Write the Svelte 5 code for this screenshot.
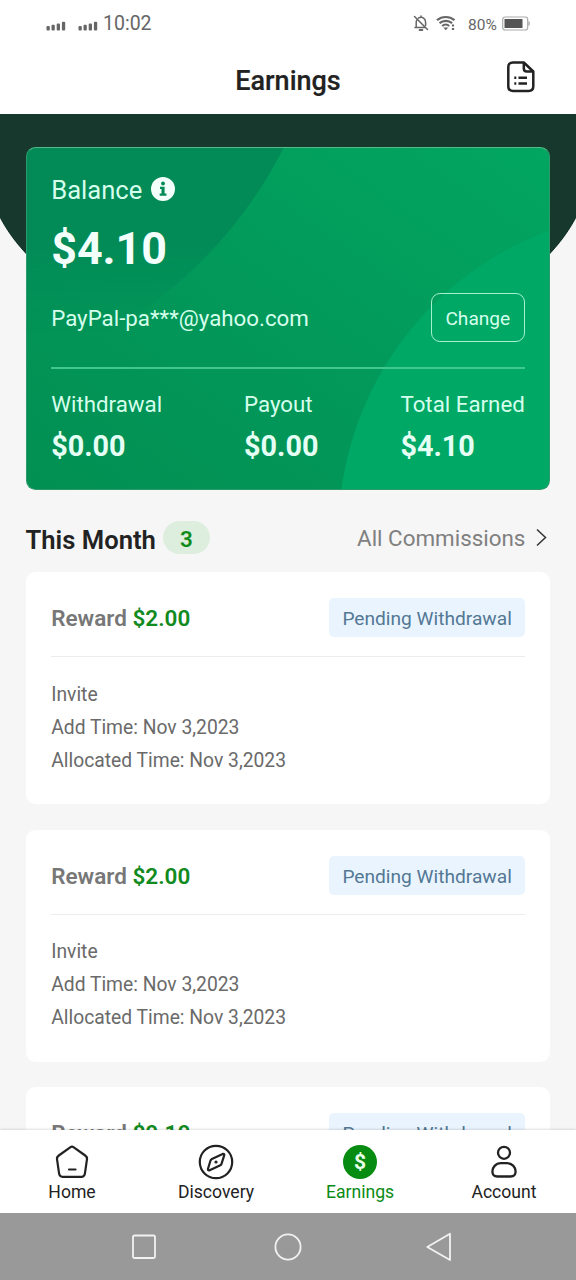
<script>
  const stats = [
    { label: 'Withdrawal', value: '$0.00' },
    { label: 'Payout', value: '$0.00' },
    { label: 'Total Earned', value: '$4.10' }
  ];
  const rewards = [
    { amount: '$2.00', status: 'Pending Withdrawal', kind: 'Invite', added: 'Nov 3,2023', allocated: 'Nov 3,2023' },
    { amount: '$2.00', status: 'Pending Withdrawal', kind: 'Invite', added: 'Nov 3,2023', allocated: 'Nov 3,2023' },
    { amount: '$0.10', status: 'Pending Withdrawal', kind: 'Invite', added: 'Nov 3,2023', allocated: 'Nov 3,2023' }
  ];
</script>

{#snippet signal()}
  <svg class="signal" width="20" height="10" viewBox="0 0 20 10" fill="#666">
    <rect x="0.5" y="5" width="3.300" height="4.500" rx="1" />
    <rect x="5.5" y="3.800" width="3.300" height="5.700" rx="1" />
    <rect x="10.7" y="2.600" width="3.300" height="6.900" rx="1" />
    <rect x="15.9" y="0.800" width="3.300" height="8.700" rx="1" />
  </svg>
{/snippet}

<div class="screen">
  <div class="status">
    <div class="carriers">{@render signal()}{@render signal()}</div>
    <span class="clock">10:02</span>
    <svg class="bell" width="16" height="17" viewBox="0 0 16 17" fill="none" stroke="#666" stroke-width="1.5" stroke-linecap="round">
      <path d="M3.2 12.500V7.200c0-1 .3-1.900.8-2.600M5.400 3.100C7 2 9 2 10.600 3.100c1.300.9 2 2.400 2 4.100v3.300M2 12.600h9.700M1.500 1.500l13 13M8 1v1.200" />
      <path d="M6.700 15h2.600" stroke-width="2" />
    </svg>
    <svg class="wifi" width="20" height="16" viewBox="0 0 20 16" fill="none" stroke="#666" stroke-width="2.200">
      <path d="M1 5.200c5-4.300 12.500-4.300 17.500 0M3.500 8.100c3.600-3 9-3 12.600 0M6.200 11c2-1.800 5-1.800 7 0" />
      <path d="M7.300 12.400h5l-2.500 2.800z" fill="#666" stroke="none" />
      <path d="M17 9.500v2M17 13v2" />
    </svg>
    <span class="percent">80%</span>
    <svg class="battery" width="28" height="15" viewBox="0 0 28 15">
      <rect x="0.700" y="1" width="25" height="13" rx="2.500" fill="#fff" stroke="#aaa" stroke-width="1.200" />
      <rect x="2.500" y="3" width="18" height="9" fill="#555" />
      <path d="M27 5.500v4" stroke="#aaa" stroke-width="1.400" />
    </svg>
  </div>

  <header>
    <h1>Earnings</h1>
    <svg class="doc" width="30" height="34" viewBox="0 0 30 34" fill="none" stroke="#222" stroke-width="2.500" stroke-linejoin="round">
      <path d="M17.800 2.500H7Q2.300 2.500 2.300 7.200V26.300Q2.300 31 7 31H22.600Q27.300 31 27.300 26.300V11.500Z" />
      <path d="M17.800 2.500V8.500Q17.800 11.500 20.800 11.500H27.300" />
      <path d="M12.500 17.700h8.500M12.500 23.500h8.500" />
      <path d="M8.300 17.700h2M8.300 23.500h2" />
    </svg>
  </header>

  <main>
    <section class="balance">
      <div class="title"><span>Balance</span>
        <svg width="24" height="24" viewBox="0 0 24 24"><circle cx="12" cy="12" r="12" fill="#f2fffa" /><circle cx="12" cy="6.500" r="1.900" fill="#028a55" /><path d="M9 9.800h4.600v6.800h1.900v2.200H8.700v-2.200h1.800V12H9z" fill="#028a55" /></svg>
      </div>
      <div class="amount">$4.10</div>
      <div class="account"><span>PayPal-pa***@yahoo.com</span><button>Change</button></div>
      <hr />
      <div class="stats">
        {#each stats as s}
          <div><span>{s.label}</span><strong>{s.value}</strong></div>
        {/each}
      </div>
    </section>

    <div class="heading">
      <h2>This Month</h2><span class="count">3</span>
      <a href="#all">All Commissions</a>
      <svg width="11" height="19" viewBox="0 0 11 19" fill="none" stroke="#333" stroke-width="1.500"><path d="M1 1.500l8.500 8L1 17.500" /></svg>
    </div>

    {#each rewards as r}
      <article>
        <div class="top">
          <span class="reward">Reward <b>{r.amount}</b></span>
          <span class="tag">{r.status}</span>
        </div>
        <p>{r.kind}</p>
        <p>Add Time: {r.added}</p>
        <p>Allocated Time: {r.allocated}</p>
      </article>
    {/each}
  </main>

  <nav>
    <div class="tab">
      <svg width="36" height="36" viewBox="0 0 36 36" fill="none" stroke="#222" stroke-width="2.200" stroke-linejoin="round" stroke-linecap="round">
        <path d="M16.200 3.300Q18 2.100 19.800 3.300L31.200 11.500Q33.300 13 33 15.200L30.900 29.700Q30.400 32.900 27.400 32.900H8.600Q5.600 32.900 5.100 29.700L3 15.200Q2.700 13 4.800 11.500Z" /><path d="M15 25.500h6.500" />
      </svg>
      <span>Home</span>
    </div>
    <div class="tab">
      <svg width="36" height="36" viewBox="0 0 36 36" fill="none" stroke="#222" stroke-width="2.200" stroke-linejoin="round">
        <circle cx="18" cy="18" r="16.200" /><path d="M24.700 9.900Q26.700 9.400 26.200 11.400L23.500 19.800Q23.200 20.800 22.300 21.300L11.700 26.300Q9.700 26.900 10 24.800L12.500 16.500Q12.900 15.400 13.900 14.900Z" /><circle cx="18" cy="18" r="1.600" fill="#222" stroke="none" />
      </svg>
      <span>Discovery</span>
    </div>
    <div class="tab active">
      <div class="coin">$</div>
      <span>Earnings</span>
    </div>
    <div class="tab">
      <svg width="36" height="36" viewBox="0 0 36 36" fill="none" stroke="#222" stroke-width="2.300">
        <circle cx="18" cy="8.800" r="6" /><path d="M15 19.200H21C26.500 19.200 29.600 23.500 29.600 27.500Q29.600 32.500 24.600 32.500H11.400Q6.400 32.500 6.400 27.500C6.400 23.500 9.500 19.200 15 19.200Z" />
      </svg>
      <span>Account</span>
    </div>
  </nav>

  <div class="system">
    <svg width="28" height="30" viewBox="0 0 28 30"><rect x="3" y="3.500" width="22" height="22.500" rx="1.500" /></svg>
    <svg width="28" height="30" viewBox="0 0 28 30"><circle cx="14" cy="15" r="12.600" /></svg>
    <svg class="back" width="28" height="30" viewBox="0 0 28 30"><path d="M2.300 15L25 1.800V28Z" /></svg>
  </div>
</div>

<style>
  :global(body) { margin: 0; background: #f6f6f6; }
  .screen { width: 576px; height: 1280px; display: flex; flex-direction: column; overflow: hidden; font-family: Roboto, sans-serif; color: #222; }
  svg { display: block; flex: none; }
  h1, h2, p, hr { margin: 0; }
  .status { height: 46px; flex: none; display: flex; align-items: center; background: #fff; color: #666; box-sizing: border-box; padding-left: 46px; }
  .carriers { display: flex; gap: 12px; margin-top: 6px; }
  .clock { font-size: 19.500px; margin-left: 5px; width: 310px; flex: none; }
  .bell { margin-right: 7px; }
  .wifi { margin-right: 12px; }
  .percent { font-size: 15.500px; margin-top: 3px; margin-right: 5px; }
  header { height: 68px; flex: none; background: #fff; display: grid; grid-template-columns: 1fr auto 1fr; align-items: center; box-sizing: border-box; }
  h1 { grid-column: 2; font-size: 27px; line-height: 34px; font-weight: 500; -webkit-text-stroke: 0.200px; padding-top: 2px; }
  .doc { justify-self: end; margin-right: 40px; margin-top: -6px; }
  main { flex: 1; min-height: 0; overflow: hidden; padding: 33px 25.600px 0; background: radial-gradient(ellipse 303.400px 187.400px at 288px 46px, #17392d 99.700%, #f6f6f6 100%) 0 46px / 100% 300px no-repeat, linear-gradient(#17392d 46px, #f6f6f6 46px); background-position: 0 0; }
  .balance { position: relative; z-index: 0; box-sizing: border-box; height: 342.500px; padding: 28px 24.600px 0; border: 1px solid #2c9a6b; border-top-color: #55b98b; border-radius: 9.600px; color: #d5ffec;
    background: radial-gradient(circle at 634px 385px, #00a866 322px, transparent 323px), linear-gradient(215deg, #02a660 0%, #02985a 55%, #028f52 100%); }
  .balance::before { content: ''; position: absolute; inset: 0; z-index: -1; border-radius: 9px; background: radial-gradient(circle at -140px -201px, #028a57 444px, transparent 445px); mask-image: linear-gradient(#000 90px, transparent 185px); }
  .title { display: flex; align-items: center; gap: 9px; height: 28px; font-size: 25.600px; }
  .title svg { margin-top: -3px; }
  .amount { margin-top: 23px; line-height: 44px; font-size: 44.800px; font-weight: 700; color: #f2fffa; }
  .account { margin-top: 22px; height: 49px; display: flex; align-items: center; justify-content: space-between; font-size: 22.300px; }
  .account span { padding-top: 1px; }
  button { font: inherit; font-size: 19.100px; color: inherit; background: none; border: 1.600px solid #a5f0cf; border-radius: 9px; width: 94px; height: 49px; padding: 1px 0 0; }
  hr { border: 0; height: 1.600px; background: #42c791; margin-top: 25px; }
  .stats { margin-top: 21px; display: flex; justify-content: space-between; }
  .stats div { display: flex; flex-direction: column; gap: 14.500px; line-height: 28px; font-size: 22.300px; }
  .stats strong { font-size: 28.800px; color: #e5fff5; }
  .heading { display: flex; align-items: center; height: 33px; margin-top: 31.500px; margin-bottom: 18px; }
  h2 { font-size: 25.600px; line-height: 30px; font-weight: 600; padding-top: 4px; }
  .count { width: 47px; height: 33px; line-height: 36px; border-radius: 17px; background: #deeede; color: #0e8c1a; font-size: 22.400px; font-weight: 600; text-align: center; margin-left: 7px; }
  .heading a { margin-left: auto; margin-right: 11px; color: #808080; font-size: 22.400px; text-decoration: none; }
  .heading svg { margin-right: 3px; }
  article { box-sizing: border-box; height: 232px; margin-bottom: 25.500px; padding: 26px 25.600px 0; background: #fff; border-radius: 9.600px; color: #6a6a6a; }
  .top { height: 58px; border-bottom: 1px solid #ececec; margin-bottom: 20.500px; display: flex; align-items: flex-start; justify-content: space-between; }
  .reward { font-size: 22.500px; line-height: 40px; font-weight: 600; color: #777; }
  .reward b { font-weight: 600; color: #118a1e; }
  .tag { background: #eaf4ff; color: #537894; font-size: 19.150px; line-height: 41px; height: 39px; padding: 0 13px; border-radius: 5px; }
  p { font-size: 19.300px; line-height: 33px; }
  nav { height: 83px; flex: none; display: flex; background: #fff; box-shadow: 0 -1px 2px rgba(0, 0, 0, 0.120); position: relative; }
  .tab { flex: 1; display: flex; flex-direction: column; align-items: center; padding-top: 14px; font-size: 17.600px; line-height: 24px; }
  .active { color: #0b8b14; }
  .coin { width: 34px; height: 34px; margin: 1px 0; border-radius: 50%; background: #078b10; color: #e8ffe8; font-size: 21px; line-height: 35px; font-weight: 700; text-align: center; }
  .system { height: 67px; flex: none; background: #999; display: flex; align-items: center; justify-content: center; gap: 116px; }
  .system svg { fill: none; stroke: #f2f2f2; stroke-width: 1.800; stroke-linejoin: round; }
  .system .back { margin-left: 6.500px; margin-right: -6.500px; }
</style>
